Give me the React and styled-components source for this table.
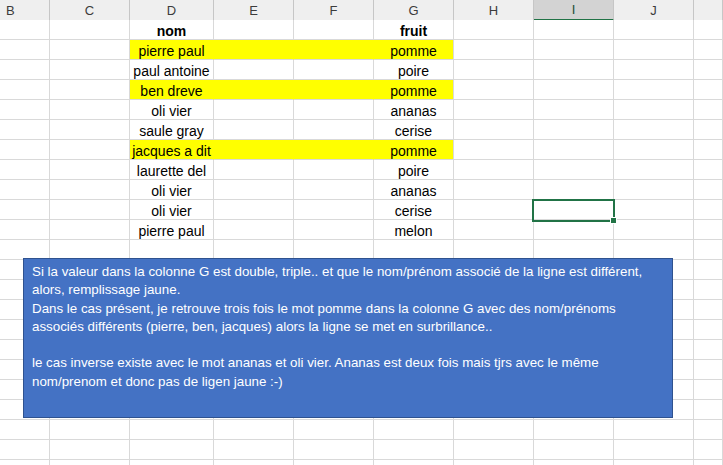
import styled, { createGlobalStyle } from 'styled-components';

const GlobalStyle = createGlobalStyle`
  html, body {
    margin: 0;
    padding: 0;
    background: #ffffff;
  }
  body {
    font-family: "Liberation Sans", Arial, sans-serif;
  }
`;

const columns = ['B', 'C', 'D', 'E', 'F', 'G', 'H', 'I', 'J', ''];

const data = [
  { nom: 'nom', fruit: 'fruit', bold: true },
  { nom: 'pierre paul', fruit: 'pomme', hl: true },
  { nom: 'paul antoine', fruit: 'poire' },
  { nom: 'ben dreve', fruit: 'pomme', hl: true },
  { nom: 'oli vier', fruit: 'ananas' },
  { nom: 'saule gray', fruit: 'cerise' },
  { nom: 'jacques a dit', fruit: 'pomme', hl: true },
  { nom: 'laurette del', fruit: 'poire' },
  { nom: 'oli vier', fruit: 'ananas' },
  { nom: 'oli vier', fruit: 'cerise' },
  { nom: 'pierre paul', fruit: 'melon' },
];

const EMPTY_ROWS = 12;

const Window = styled.div`
  position: relative;
  width: 723px;
  height: 465px;
  overflow: hidden;
  background: #ffffff;
`;

const Sheet = styled.div`
  display: grid;
  grid-template-columns: 50px 80px 84px 80px 80px 80px 80px 80px 80px 1fr;
  grid-auto-rows: 20px;
`;

const HeaderCell = styled.div`
  box-sizing: border-box;
  height: 21px;
  display: flex;
  align-items: center;
  justify-content: ${(p) => (p.$first ? 'flex-start' : 'center')};
  padding-left: ${(p) => (p.$first ? '6px' : '0')};
  background: ${(p) => (p.$active ? '#d3d3d3' : '#efefef')};
  border-right: 1px solid #c6c6c6;
  border-bottom: ${(p) => (p.$active ? '2px solid #217346' : '1px solid #ababab')};
  color: ${(p) => (p.$active ? '#1e4d33' : '#3c3c3c')};
  font-size: 13px;
`;

const Cell = styled.div`
  box-sizing: border-box;
  height: 20px;
  padding-top: 3px;
  display: flex;
  align-items: center;
  justify-content: center;
  white-space: nowrap;
  overflow: visible;
  background: ${(p) => (p.$fill ? '#ffff00' : '#ffffff')};
  border-right: 1px solid ${(p) => (p.$joined ? '#ffff00' : '#d9d9d9')};
  border-bottom: 1px solid #d9d9d9;
  color: #000000;
  font-size: 14px;
  font-weight: ${(p) => (p.$bold ? 700 : 400)};
`;

const Selection = styled.div`
  position: absolute;
  left: 532px;
  top: 199px;
  width: 83px;
  height: 23px;
  box-sizing: border-box;
  border: 2px solid #217346;
  pointer-events: none;
`;

const FillHandle = styled.div`
  position: absolute;
  right: -4px;
  bottom: -4px;
  width: 5px;
  height: 5px;
  background: #217346;
  border: 1px solid #ffffff;
`;

const TextBox = styled.div`
  position: absolute;
  left: 23px;
  top: 258px;
  width: 650px;
  height: 160px;
  box-sizing: border-box;
  padding: 4px 8px;
  background: #4472c4;
  border: 1px solid #2f528f;
  color: #ffffff;
  font-size: 13.35px;
  line-height: 18.3px;
`;

const Line = styled.div`
  white-space: nowrap;
  min-height: 18.3px;
`;

const boxLines = [
  'Si la valeur dans la colonne G est double, triple.. et que le nom/prénom associé de la ligne est différent,',
  'alors, remplissage jaune.',
  'Dans le cas présent, je retrouve trois fois le mot pomme dans la colonne G avec des nom/prénoms',
  'associés différents (pierre, ben, jacques) alors la ligne se met en surbrillance..',
  '',
  'le cas inverse existe avec le mot ananas et oli vier. Ananas est deux fois mais tjrs avec le même',
  'nom/prenom et donc pas de ligen jaune :-)',
];

function DataRow({ row }) {
  return columns.map((col, i) => {
    const inFill = row.hl && i >= 2 && i <= 5;
    let text = '';
    if (col === 'D') text = row.nom;
    if (col === 'G') text = row.fruit;
    return (
      <Cell key={i} $fill={inFill} $joined={row.hl && i >= 2 && i <= 4} $bold={row.bold}>
        {text}
      </Cell>
    );
  });
}

export default function App() {
  const rows = [...data];
  for (let i = 0; i < EMPTY_ROWS; i += 1) rows.push({ nom: '', fruit: '' });

  return (
    <Window>
      <GlobalStyle />
      <Sheet>
        {columns.map((col, i) => (
          <HeaderCell key={`h${i}`} $first={i === 0} $active={col === 'I'}>
            {col}
          </HeaderCell>
        ))}
        {rows.map((row, r) => (
          <DataRow key={r} row={row} />
        ))}
      </Sheet>
      <Selection>
        <FillHandle />
      </Selection>
      <TextBox>
        {boxLines.map((l, i) => (
          <Line key={i}>{l}</Line>
        ))}
      </TextBox>
    </Window>
  );
}
